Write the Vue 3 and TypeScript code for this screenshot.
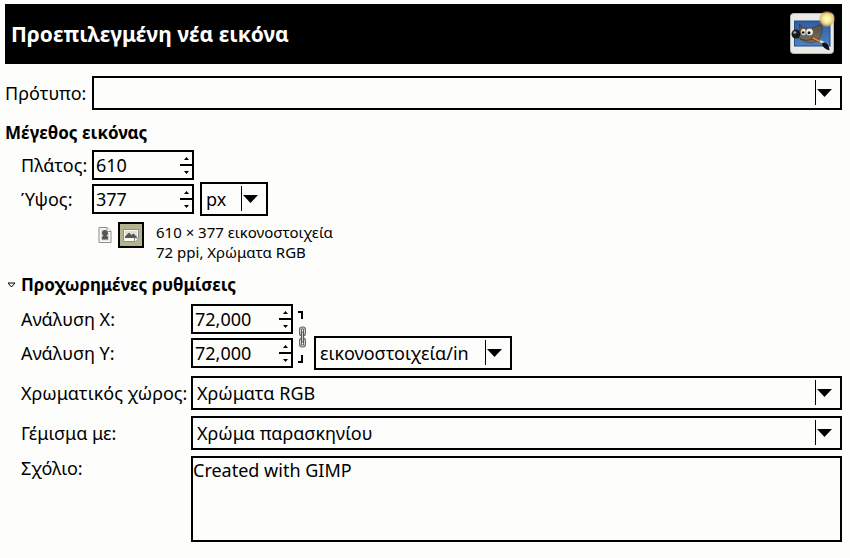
<script setup lang="ts">
import { computed, ref } from 'vue'

const template = ref('')
const width = ref('610')
const height = ref('377')
const sizeUnit = ref('px')
const xRes = ref('72,000')
const yRes = ref('72,000')
const resUnit = ref('εικονοστοιχεία/in')
const colorSpace = ref('Χρώματα RGB')
const fillWith = ref('Χρώμα παρασκηνίου')
const comment = ref('Created with GIMP')
const linked = ref(true)

const isLandscape = computed(() => Number(width.value) > Number(height.value))

function stepSize(field: 'width' | 'height', by: number): void {
  const target = field === 'width' ? width : height
  target.value = String(Math.max(1, Number(target.value) + by))
}

function stepResolution(field: 'x' | 'y', by: number): void {
  const source = field === 'x' ? xRes : yRes
  const next = Math.max(1, Number(source.value.replace(',', '.')) + by)
  const text = next.toFixed(3).replace('.', ',')
  if (linked.value || field === 'x') xRes.value = text
  if (linked.value || field === 'y') yRes.value = text
}

function orient(landscape: boolean): void {
  if (isLandscape.value !== landscape) {
    const previous = width.value
    width.value = height.value
    height.value = previous
  }
}
</script>

<template>
  <main class="dialog">
    <header class="banner">
      <h1>Προεπιλεγμένη νέα εικόνα</h1>
      <svg class="logo" viewBox="0 0 48 48" aria-hidden="true">
        <defs>
          <linearGradient id="sky" x1="0" y1="0" x2="0" y2="1">
            <stop offset="0" stop-color="#2c5da0" />
            <stop offset="1" stop-color="#4f83c6" />
          </linearGradient>
          <linearGradient id="fur" x1="0" y1="0" x2="0" y2="1">
            <stop offset="0" stop-color="#4f483f" />
            <stop offset="1" stop-color="#7a7062" />
          </linearGradient>
          <radialGradient id="glow">
            <stop offset="0" stop-color="#ffffd8" />
            <stop offset="0.45" stop-color="#f6ee8a" />
            <stop offset="0.75" stop-color="#eab878" stop-opacity="0.85" />
            <stop offset="1" stop-color="#d89060" stop-opacity="0" />
          </radialGradient>
        </defs>
        <rect x="2.500" y="3.500" width="43" height="40" rx="3" fill="#e9e9e6" stroke="#b9b9b5" />
        <rect x="6.500" y="11" width="35.500" height="25" fill="url(#sky)" stroke="#234a85" />
        <path d="M11 21 C12 19 11.500 18 11.500 14 C13.500 17 15 18 18 18 C24 18.500 29 17 33.700 12.500 C34.500 19 34.500 24 31.500 28 C28.500 32 24 33.500 19.500 32.500 C15 31.500 13 29 9 27.500 Z" fill="url(#fur)" stroke="#3a342d" stroke-width="0.600" />
        <path d="M12 29 Q18 31.500 24 29.500" fill="none" stroke="#39332c" stroke-width="0.800" />
        <ellipse cx="8" cy="24" rx="4.500" ry="4.500" fill="#17191c" />
        <ellipse cx="6.800" cy="22.500" rx="1.600" ry="1.300" fill="#9aa1aa" />
        <ellipse cx="15.500" cy="22" rx="2.800" ry="3.500" fill="#f2f2ef" stroke="#504a42" stroke-width="0.600" />
        <ellipse cx="21.500" cy="22" rx="3.800" ry="3.800" fill="#f2f2ef" stroke="#504a42" stroke-width="0.600" />
        <circle cx="15.200" cy="22.500" r="1.300" fill="#111" />
        <circle cx="21" cy="22.700" r="1.500" fill="#111" />
        <path d="M24.500 28 L34 32.500" stroke="#6c3a12" stroke-width="2.800" stroke-linecap="round" />
        <path d="M24.500 27.800 L33 32" stroke="#ec8b2b" stroke-width="1.700" />
        <path d="M32 31.200 L36 33.200" stroke="#d8d8d4" stroke-width="2.500" />
        <path d="M34 33.500 C37 31 41 34 41.500 40.500 C38 39.500 34 37 34 33.500 Z" fill="#131313" />
        <circle cx="39" cy="9" r="8.500" fill="url(#glow)" />
      </svg>
    </header>

    <div class="row template-row">
      <label for="template">Πρότυπο:</label>
      <div class="combo">
        <select id="template" v-model="template">
          <option value=""></option>
        </select>
        <svg class="arrow" viewBox="0 0 18 26" aria-hidden="true"><path d="M0 0H1V25H0Z M2 9H17L9.500 17Z" /></svg>
      </div>
    </div>

    <section>
      <h2>Μέγεθος εικόνας</h2>
      <div class="grid size-grid">
        <label for="width">Πλάτος:</label>
        <div class="fields first">
          <div class="spin">
            <input id="width" v-model="width" type="text" inputmode="numeric">
            <div class="steps">
              <button type="button" aria-label="Αύξηση πλάτους" @click="stepSize('width', 1)"><svg viewBox="0 0 5 3"><path d="M0 3L2.500 0L5 3Z" /></svg></button>
              <button type="button" aria-label="Μείωση πλάτους" @click="stepSize('width', -1)"><svg viewBox="0 0 5 3"><path d="M0 0L2.500 3L5 0Z" /></svg></button>
            </div>
          </div>
        </div>
        <label for="height">Ύψος:</label>
        <div class="fields">
          <div class="spin">
            <input id="height" v-model="height" type="text" inputmode="numeric">
            <div class="steps">
              <button type="button" aria-label="Αύξηση ύψους" @click="stepSize('height', 1)"><svg viewBox="0 0 5 3"><path d="M0 3L2.500 0L5 3Z" /></svg></button>
              <button type="button" aria-label="Μείωση ύψους" @click="stepSize('height', -1)"><svg viewBox="0 0 5 3"><path d="M0 0L2.500 3L5 0Z" /></svg></button>
            </div>
          </div>
          <div class="combo unit">
            <select v-model="sizeUnit" aria-label="Μονάδα μεγέθους">
              <option>px</option>
            </select>
            <svg class="arrow" viewBox="0 0 18 26" aria-hidden="true"><path d="M0 0H1V25H0Z M2 9H17L9.500 17Z" /></svg>
          </div>
        </div>
      </div>
      <div class="summary">
        <div class="orientation">
          <button type="button" aria-label="Κατακόρυφα" :class="{ active: !isLandscape }" @click="orient(false)">
            <svg viewBox="0 0 16 16">
              <path d="M2 .5H10L14 4.500V15.500H2Z" fill="#fafaf8" stroke="#8b8d88" />
              <path d="M4 2.500H9V6H12V13.500H4Z" fill="#d8d9d5" />
              <path d="M5 12.500V10L6.500 8.500C5.500 8 5 7 5 6C5 4 6.500 3 8 3C9.500 3 11 4 11 6C11 7 10.500 8 9.500 8.500L11 10V12.500Z" fill="#555753" />
              <path d="M10 .5V4.500H14" fill="#fff" stroke="#8b8d88" />
            </svg>
          </button>
          <button type="button" aria-label="Οριζόντια" :class="{ active: isLandscape }" @click="orient(true)">
            <svg viewBox="0 0 16 16">
              <path d="M.5 2.500H15.500V11L12 14.500H.5Z" fill="#fafaf8" stroke="#8b8d88" />
              <path d="M2 4H14V11H2Z" fill="#dedfda" />
              <path d="M2 11V9.500L6 5.500L8.500 8L10.500 6.500L14 10V11Z" fill="#555753" />
              <path d="M11.500 14.500V11H15.500" fill="#fff" stroke="#8b8d88" />
            </svg>
          </button>
        </div>
        <p>{{ width }} × {{ height }} εικονοστοιχεία<br>72 ppi, Χρώματα RGB</p>
      </div>
    </section>

    <details open>
      <summary>
        <svg viewBox="0 0 9 6" aria-hidden="true"><path d="M1 1H8L4.500 5Z" /></svg>
        <h2>Προχωρημένες ρυθμίσεις</h2>
      </summary>
      <div class="grid advanced-grid">
        <div class="labels">
          <label for="xres">Ανάλυση Χ:</label>
          <label for="yres">Ανάλυση Υ:</label>
        </div>
        <div class="resolution">
          <div class="stack">
            <div class="spin">
              <input id="xres" v-model="xRes" type="text" inputmode="decimal">
              <div class="steps">
                <button type="button" aria-label="Αύξηση ανάλυσης Χ" @click="stepResolution('x', 1)"><svg viewBox="0 0 5 3"><path d="M0 3L2.500 0L5 3Z" /></svg></button>
                <button type="button" aria-label="Μείωση ανάλυσης Χ" @click="stepResolution('x', -1)"><svg viewBox="0 0 5 3"><path d="M0 0L2.500 3L5 0Z" /></svg></button>
              </div>
            </div>
            <div class="spin">
              <input id="yres" v-model="yRes" type="text" inputmode="decimal">
              <div class="steps">
                <button type="button" aria-label="Αύξηση ανάλυσης Υ" @click="stepResolution('y', 1)"><svg viewBox="0 0 5 3"><path d="M0 3L2.500 0L5 3Z" /></svg></button>
                <button type="button" aria-label="Μείωση ανάλυσης Υ" @click="stepResolution('y', -1)"><svg viewBox="0 0 5 3"><path d="M0 0L2.500 3L5 0Z" /></svg></button>
              </div>
            </div>
          </div>
          <button class="chain" type="button" aria-label="Σύνδεση αναλύσεων" :aria-pressed="linked" @click="linked = !linked">
            <svg viewBox="0 0 10 54">
              <path d="M0 2H4V9" fill="none" stroke="#000" stroke-width="2" />
              <path d="M0 52H4V45" fill="none" stroke="#000" stroke-width="2" />
              <g fill="none">
                <rect x="2.500" y="18" width="4" height="7" rx="1.500" stroke="#666964" stroke-width="3" />
                <rect x="2.500" y="29" width="4" height="7" rx="1.500" stroke="#666964" stroke-width="3" />
                <rect x="2.500" y="18" width="4" height="7" rx="1.500" stroke="#d4d5d1" />
                <rect x="2.500" y="29" width="4" height="7" rx="1.500" stroke="#d4d5d1" />
                <path d="M4.500 21.500V32.500" stroke="#555753" stroke-width="3" />
                <path d="M4.500 22.500V31.500" stroke="#d4d5d1" />
              </g>
            </svg>
          </button>
          <div class="combo res-unit">
            <select v-model="resUnit" aria-label="Μονάδα ανάλυσης">
              <option>εικονοστοιχεία/in</option>
            </select>
            <svg class="arrow" viewBox="0 0 18 26" aria-hidden="true"><path d="M0 0H1V25H0Z M2 9H17L9.500 17Z" /></svg>
          </div>
        </div>
        <label for="space">Χρωματικός χώρος:</label>
        <div class="combo">
          <select id="space" v-model="colorSpace">
            <option>Χρώματα RGB</option>
          </select>
          <svg class="arrow" viewBox="0 0 18 26" aria-hidden="true"><path d="M0 0H1V25H0Z M2 9H17L9.500 17Z" /></svg>
        </div>
        <label for="fill">Γέμισμα με:</label>
        <div class="combo">
          <select id="fill" v-model="fillWith">
            <option>Χρώμα παρασκηνίου</option>
          </select>
          <svg class="arrow" viewBox="0 0 18 26" aria-hidden="true"><path d="M0 0H1V25H0Z M2 9H17L9.500 17Z" /></svg>
        </div>
        <label class="top" for="comment">Σχόλιο:</label>
        <textarea id="comment" v-model="comment" spellcheck="false"></textarea>
      </div>
    </details>
  </main>
</template>

<style>
body {
  background: #fdfefc;
}
</style>

<style scoped>
.dialog,
.dialog * {
  box-sizing: border-box;
}

.dialog {
  padding: 4px 8px 16px 5px;
  color: #000;
  font: 18px/24px "Noto Sans", "Open Sans", sans-serif;
}

h1,
h2,
p {
  margin: 0;
}

h1 {
  font-size: 21px;
  line-height: 28px;
}

h2 {
  font-size: 17px;
  line-height: 24px;
}

label {
  white-space: nowrap;
}

input,
select,
textarea,
button {
  margin: 0;
  padding: 0;
  border: 0;
  border-radius: 0;
  background: transparent;
  color: inherit;
  font: inherit;
}

.banner {
  display: flex;
  align-items: center;
  justify-content: space-between;
  height: 60px;
  padding: 0 6px;
  background: #000;
  color: #fff;
}

.logo {
  width: 48px;
  height: 48px;
}

.template-row {
  display: grid;
  grid-template-columns: 81px 1fr;
  gap: 6px;
  align-items: center;
  margin: 12px 0 11px;
}

.grid {
  display: grid;
  align-items: center;
  padding-left: 16px;
  column-gap: 6px;
}

.size-grid {
  grid-template-columns: 65px 1fr;
  row-gap: 2px;
  margin-top: 5px;
}

.advanced-grid {
  grid-template-columns: 164px 1fr;
  row-gap: 6px;
  margin-top: 5px;
}

.fields {
  display: flex;
  align-items: center;
  gap: 6px;
}

.combo {
  display: grid;
  height: 34px;
  border: 2px solid #000;
}

.combo select {
  grid-area: 1 / 1;
  width: 100%;
  padding: 0 28px 0 4px;
  appearance: none;
}

.arrow {
  grid-area: 1 / 1;
  justify-self: end;
  align-self: center;
  width: 18px;
  height: 26px;
  margin-right: 7px;
  pointer-events: none;
}

.unit {
  width: 68px;
}

.res-unit {
  align-self: end;
  width: 198px;
}

.spin {
  display: flex;
  width: 102px;
  height: 30px;
  border: 2px solid #000;
}

.spin input {
  flex: 1;
  min-width: 0;
  padding-left: 2px;
}

.steps {
  display: grid;
  grid-template-rows: 1fr 1fr;
  row-gap: 2px;
  width: 12px;
  background: linear-gradient(#000, #000) center / 100% 2px no-repeat;
}

.steps button {
  display: grid;
  place-items: center;
}

.steps svg {
  width: 5px;
  height: 3px;
}

.summary {
  display: flex;
  align-items: flex-start;
  gap: 12px;
  margin: 6px 0 11px;
  padding-left: 87px;
}

.orientation {
  display: flex;
}

.orientation button {
  display: grid;
  place-items: center;
  width: 26px;
  height: 26px;
  border: 2px solid transparent;
}

.orientation button.active {
  border-color: #000;
  background: #b3b48b;
}

.orientation svg {
  width: 16px;
  height: 16px;
}

.summary p {
  font-size: 15px;
  line-height: 20px;
}

details > summary {
  display: flex;
  align-items: center;
  gap: 5px;
  list-style: none;
  padding-left: 2px;
}

details > summary svg {
  width: 9px;
  height: 6px;
  fill: #fff;
  stroke: #000;
}

.labels {
  display: grid;
  gap: 10px;
}

.resolution {
  display: flex;
  align-items: center;
  margin-top: 2px;
}

.stack {
  display: grid;
  gap: 4px;
  padding-bottom: 2px;
}

.chain {
  width: 10px;
  height: 54px;
  margin: 0 6px 0 5px;
}

.chain svg {
  display: block;
  width: 10px;
  height: 54px;
}

.top {
  align-self: start;
}

textarea {
  display: block;
  width: 100%;
  height: 86px;
  border: 2px solid #000;
  resize: none;
}

input:focus-visible,
select:focus-visible,
textarea:focus-visible,
button:focus-visible {
  outline: 1px dotted #000;
}
</style>
